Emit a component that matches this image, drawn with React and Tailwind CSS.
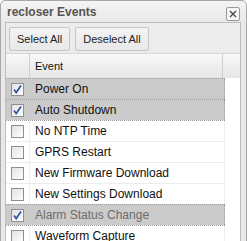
import React from "react";

const rows = [
  { label: "Power On", checked: true, sel: true },
  { label: "Auto Shutdown", checked: true, sel: true },
  { label: "No NTP Time" },
  { label: "GPRS Restart" },
  { label: "New Firmware Download" },
  { label: "New Settings Download" },
  { label: "Alarm Status Change", checked: true, sel: true, dim: true },
  { label: "Waveform Capture" },
];

function Check({ checked }) {
  return (
    <svg width="13" height="13" viewBox="0 0 13 13">
      <defs>
        <linearGradient id="cbg" x1="0" y1="0" x2="1" y2="1">
          <stop offset="0" stopColor="#e2e2e2" />
          <stop offset="1" stopColor="#ffffff" />
        </linearGradient>
      </defs>
      <rect x="0.5" y="0.5" width="12" height="12" fill="url(#cbg)" stroke="#8f8f8f" />
      {checked && (
        <path d="M3 6.5 L5.2 9.5 L10 2.5" fill="none" stroke="#2b4ea8" strokeWidth="1.6" />
      )}
    </svg>
  );
}

export default function App() {
  return (
    <div className="w-[247px] h-[241px] overflow-hidden bg-white" style={{ fontFamily: '"Liberation Sans", Arial, sans-serif' }}>
      <div className="h-[270px] border border-[#a8a8a8] rounded-t-[5px] bg-[#e9e9e9] flex flex-col">
        <div className="h-[21px] flex items-center pl-[6px] pr-[6px] bg-gradient-to-b from-[#f4f4f4] to-[#e9e9e9] rounded-t-[5px]">
          <span className="text-[12px] font-bold text-[#555]">recloser Events</span>
          <div className="ml-auto mt-[5px] w-[14px] h-[14px] border border-[#9a9a9a] rounded-[2px] bg-[#f6f6f6] flex items-center justify-center">
            <svg width="10" height="10" viewBox="0 0 10 10">
              <path d="M2 2 L8 8 M8 2 L2 8" stroke="#444" strokeWidth="1.3" />
            </svg>
          </div>
        </div>
        <div className="ml-[4px] mr-[5px] flex-1 border border-[#bdbdbd] bg-white flex flex-col">
          <div className="h-[31px] bg-[#ececec] border-b border-[#d6d6d6] flex items-start pt-[4px] pl-[3px] gap-[5px]">
            <button className="h-[24px] px-[7px] border border-[#c6c6c6] rounded-[2px] bg-gradient-to-b from-[#f3f3f3] to-[#e8e8e8] text-[11px] text-[#222]">Select All</button>
            <button className="h-[24px] px-[7px] border border-[#c6c6c6] rounded-[2px] bg-gradient-to-b from-[#f3f3f3] to-[#e8e8e8] text-[11px] text-[#222]">Deselect All</button>
          </div>
          <div className="h-[24px] flex bg-gradient-to-b from-[#f8f8f8] to-[#e6e6e6]">
            <div className="w-[24px] border-r border-[#d0d0d0]" />
            <div className="w-[193px] border-r border-[#d0d0d0] flex items-center pl-[5px] text-[11px] text-[#111]">Event</div>
            <div className="flex-1" />
          </div>
          <div className="flex flex-col">
            {rows.map((r, i) => {
              const prevSel = i > 0 && rows[i - 1].sel;
              const topCls = r.sel || prevSel ? "border-dotted border-t-[#9a9a9a]" : "border-solid border-t-[#ededed]";
              return (
                <div
                  key={r.label}
                  className={"w-[219px] h-[21px] flex border-t " + topCls + (r.sel ? " bg-[#cbcbcb]" : " bg-white")}
                >
                  <div className={"w-[24px] flex items-center justify-center border-r " + (r.sel ? "border-[#cbcbcb]" : "border-[#ededed]")}>
                    <Check checked={r.checked} />
                  </div>
                  <div
                    className={
                      "flex-1 flex items-center pl-[5px] text-[12px] " +
                      (r.sel ? "border-r border-dotted border-[#9a9a9a] " : "border-r border-[#ededed] ") +
                      (r.dim ? "text-[#6d6d6d]" : "text-[#111]")
                    }
                  >
                    {r.label}
                  </div>
                </div>
              );
            })}
          </div>
        </div>
      </div>
    </div>
  );
}
